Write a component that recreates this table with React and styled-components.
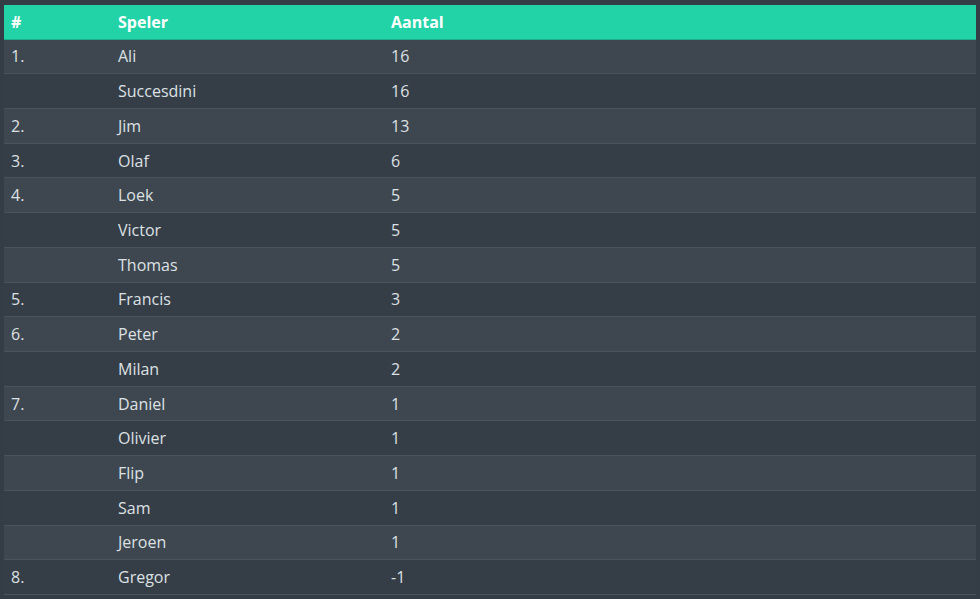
import styled, { createGlobalStyle } from "styled-components";

const GlobalStyle = createGlobalStyle`
  html, body {
    margin: 0;
    padding: 0;
    background-color: #343c46;
  }
  body {
    font-family: "Open Sans", "Liberation Sans", sans-serif;
  }
`;

const rows = [
  { rank: "1.", name: "Ali", count: "16" },
  { rank: "", name: "Succesdini", count: "16" },
  { rank: "2.", name: "Jim", count: "13" },
  { rank: "3.", name: "Olaf", count: "6" },
  { rank: "4.", name: "Loek", count: "5" },
  { rank: "", name: "Victor", count: "5" },
  { rank: "", name: "Thomas", count: "5" },
  { rank: "5.", name: "Francis", count: "3" },
  { rank: "6.", name: "Peter", count: "2" },
  { rank: "", name: "Milan", count: "2" },
  { rank: "7.", name: "Daniel", count: "1" },
  { rank: "", name: "Olivier", count: "1" },
  { rank: "", name: "Flip", count: "1" },
  { rank: "", name: "Sam", count: "1" },
  { rank: "", name: "Jeroen", count: "1" },
  { rank: "8.", name: "Gregor", count: "-1" },
];

function App() {
  return (
    <>
      <GlobalStyle />
      <Page>
        <ScoreTable>
          <thead>
            <HeadRow>
              <HeadCell $width="93px">#</HeadCell>
              <HeadCell $width="259px">Speler</HeadCell>
              <HeadCell>Aantal</HeadCell>
            </HeadRow>
          </thead>
          <tbody>
            {rows.map((row, i) => (
              <BodyRow key={row.name} $odd={i % 2 === 0}>
                <Cell>{row.rank}</Cell>
                <Cell>{row.name}</Cell>
                <Cell>{row.count}</Cell>
              </BodyRow>
            ))}
          </tbody>
        </ScoreTable>
      </Page>
    </>
  );
}

const Page = styled.div`
  padding: 5px 4px 0 4px;
`;

const ScoreTable = styled.table`
  width: 972px;
  border-collapse: collapse;
  border-spacing: 0;
  table-layout: fixed;
`;

const HeadRow = styled.tr`
  background-color: #22d3a7;
  border-bottom: 1px solid #1bb08c;
  height: 34px;
`;

const HeadCell = styled.th`
  width: ${(p) => p.$width || "auto"};
  text-align: left;
  padding: 0 7px;
  font-size: 16px;
  font-weight: 700;
  color: #ffffff;
  line-height: 24px;
`;

const BodyRow = styled.tr`
  height: 34.73px;
  background-color: ${(p) => (p.$odd ? "#3e4750" : "#353d47")};
  border-bottom: 1px solid #49535b;
`;

const Cell = styled.td`
  padding: 0 7px;
  font-size: 16px;
  line-height: 24px;
  color: #dde1e4;
  white-space: nowrap;
`;

export default App;
